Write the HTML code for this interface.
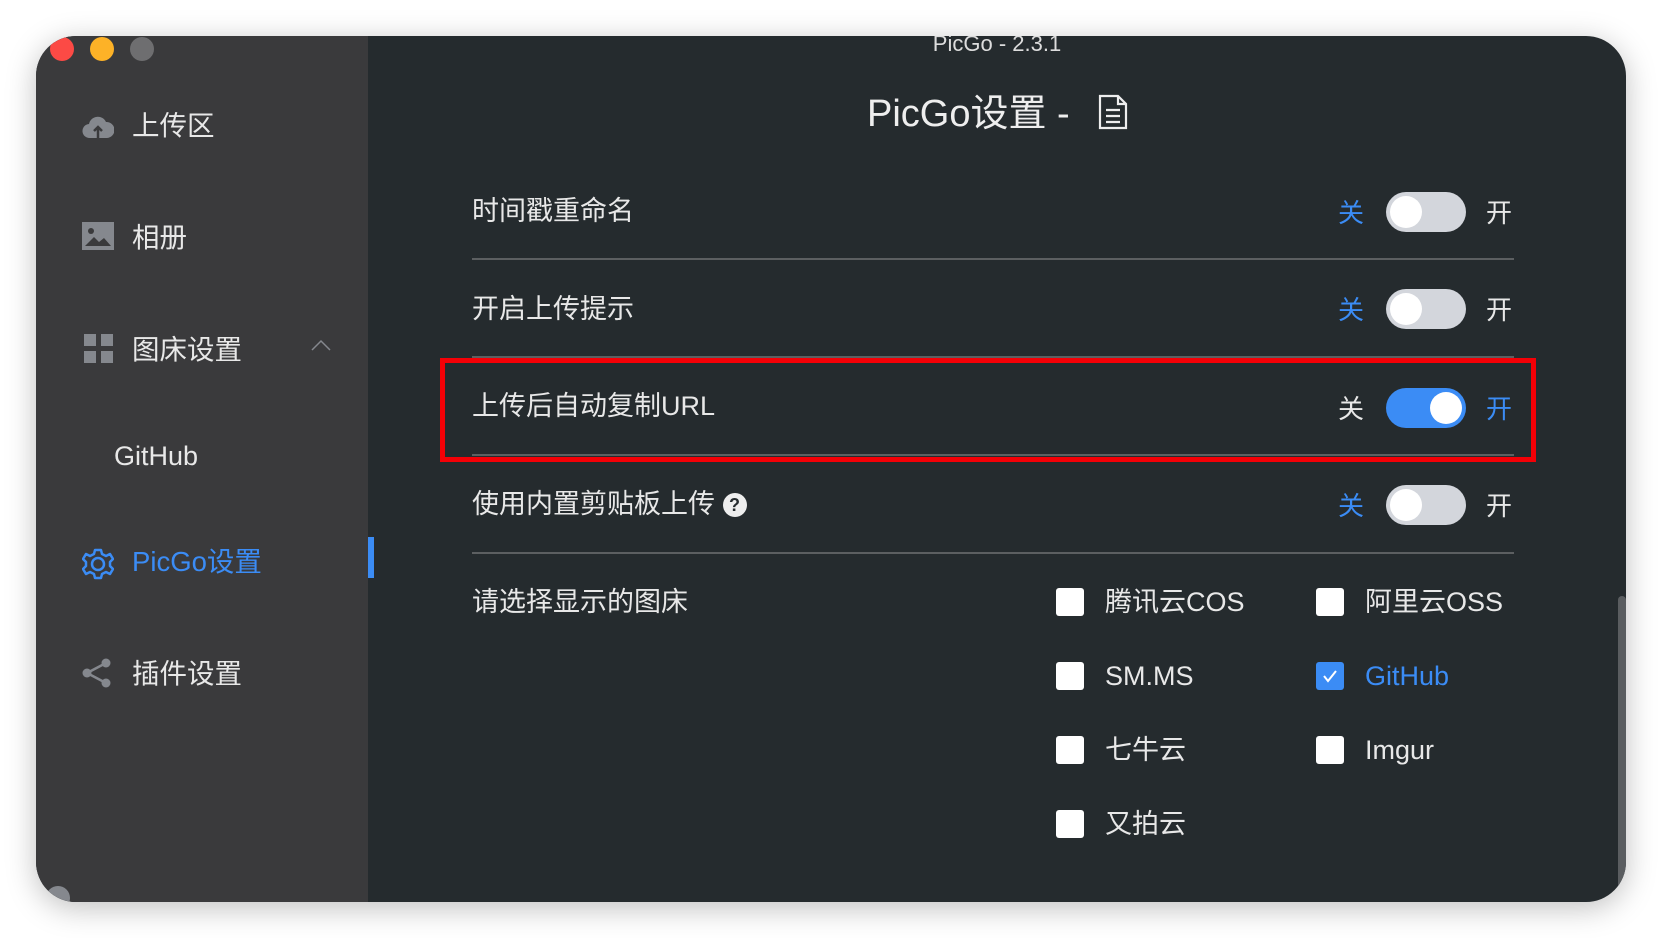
<!DOCTYPE html>
<html><head><meta charset="utf-8"><style>
*{margin:0;padding:0;box-sizing:border-box}
body{width:1662px;height:938px;background:#fff;position:relative;overflow:hidden;font-family:"Liberation Sans","Noto Sans CJK SC",sans-serif}
.win{position:absolute;left:36px;top:36px;width:1590px;height:866px;border-radius:40px;background:#252b2e;overflow:hidden;box-shadow:0 6px 30px rgba(0,0,0,.25)}
.side{position:absolute;left:0;top:0;width:332px;height:866px;background:#3a3a3c}
.dot{position:absolute;top:1px;width:24px;height:24px;border-radius:50%}
.a{position:absolute;white-space:nowrap}
.si{position:absolute;font-size:27.5px;color:#e8e8e8;line-height:32px}
.lbl{position:absolute;left:436px;font-size:27px;color:#e8e8e8;line-height:30px}
.div{position:absolute;left:436px;width:1042px;height:2px;background:#5c5f61}
.tg{position:absolute;left:1350px;width:80px;height:40px;border-radius:20px;background:#d3d6dc}
.tg i{position:absolute;top:4px;left:4px;width:32px;height:32px;border-radius:50%;background:#fff}
.off{position:absolute;left:1302px;font-size:26px;line-height:30px}
.on{position:absolute;left:1450px;font-size:26px;line-height:30px}
.cb{position:absolute;width:28px;height:28px;border-radius:3px;background:#fff}
.ct{position:absolute;font-size:27px;color:#e8e8e8;line-height:30px}
</style></head><body>
<div class="win">
<div class="side">
<div class="dot" style="left:14px;background:#fc4a45"></div>
<div class="dot" style="left:54px;background:#fdb227"></div>
<div class="dot" style="left:94px;background:#6e6e70"></div>
<svg class="a" style="left:46px;top:76px" width="32" height="28" viewBox="0 0 32 28"><path d="M8 26a7 7 0 0 1-1-14 9 9 0 0 1 17-2 7 7 0 0 1 1 16z" fill="#85888e"/><path d="M16 26V15m-4 4l4-4 4 4" stroke="#3a3a3c" stroke-width="2.5" fill="none"/></svg>
<div class="si" style="left:96px;top:74px">上传区</div>
<svg class="a" style="left:46px;top:186px" width="32" height="28" viewBox="0 0 32 28"><rect width="32" height="28" fill="#85888e"/><circle cx="9" cy="9" r="3" fill="#3a3a3c"/><path d="M3 24l9-9 5 5 5-4 7 8z" fill="#3a3a3c"/></svg>
<div class="si" style="left:96px;top:186px">相册</div>
<svg class="a" style="left:48px;top:298px" width="30" height="30" viewBox="0 0 30 30" fill="#85888e"><rect width="12" height="12"/><rect x="17" width="12" height="12"/><rect y="17" width="12" height="12"/><rect x="17" y="17" width="12" height="12"/></svg>
<div class="si" style="left:96px;top:298px">图床设置</div>
<svg class="a" style="left:275px;top:303px" width="20" height="12" viewBox="0 0 20 12"><path d="M1 11l9-9 9 9" stroke="#85888e" stroke-width="1.5" fill="none"/></svg>
<div class="si" style="left:78px;top:404px;font-size:27px">GitHub</div>
<svg class="a" style="left:46px;top:512px" width="32" height="32" viewBox="0 0 32 32"><circle cx="16" cy="16" r="6" stroke="#3b8cf5" stroke-width="2.5" fill="none"/><path d="M13 2h6l1 4 4 2 4-2 3 5-3 3v4l3 3-3 5-4-2-4 2-1 4h-6l-1-4-4-2-4 2-3-5 3-3v-4L1 11l3-5 4 2 4-2z" stroke="#3b8cf5" stroke-width="2.5" fill="none" stroke-linejoin="round"/></svg>
<div class="si" style="left:96px;top:510px;color:#3b8cf5">PicGo设置</div>
<svg class="a" style="left:46px;top:622px" width="30" height="30" viewBox="0 0 30 30" fill="#85888e"><circle cx="24" cy="5" r="4.5"/><circle cx="5" cy="15" r="4.5"/><circle cx="24" cy="25" r="4.5"/><path d="M24 5L5 15l19 10" stroke="#85888e" stroke-width="2.5" fill="none"/></svg>
<div class="si" style="left:96px;top:622px">插件设置</div>
<div class="a" style="left:10px;top:850px;width:24px;height:24px;border-radius:50%;background:#85888e"></div>
</div>
<div class="a" style="left:332px;top:501px;width:6px;height:41px;background:#3b8cf5"></div>
<div class="a" style="left:332px;width:1258px;top:-5px;text-align:center;font-size:22px;color:#ddd">PicGo - 2.3.1</div>
<div class="a" style="left:831px;top:56px;font-size:38px;color:#eee;line-height:44px">PicGo设置 - </div>
<svg class="a" style="left:1062px;top:58px" width="30" height="36" viewBox="0 0 30 36"><path d="M2 2h18l8 8v24H2z M20 2v8h8 M8 16h14 M8 22h14 M8 28h14" stroke="#eee" stroke-width="2.2" fill="none"/></svg>

<div class="lbl" style="top:160px">时间戳重命名</div>
<div class="off" style="top:162px;color:#3b8cf5">关</div><div class="tg" style="top:156px"><i></i></div><div class="on" style="top:162px;color:#e8e8e8">开</div>
<div class="div" style="top:222px"></div>
<div class="lbl" style="top:258px">开启上传提示</div>
<div class="off" style="top:259px;color:#3b8cf5">关</div><div class="tg" style="top:253px"><i></i></div><div class="on" style="top:259px;color:#e8e8e8">开</div>
<div class="div" style="top:320px"></div>
<div class="lbl" style="top:355px">上传后自动复制URL</div>
<div class="off" style="top:358px;color:#e8e8e8">关</div><div class="tg" style="top:352px;background:#3b8cf5"><i style="left:44px"></i></div><div class="on" style="top:358px;color:#3b8cf5">开</div>
<div class="div" style="top:418px"></div>
<div class="a" style="left:404px;top:322px;width:1096px;height:104px;border:5px solid #f40006"></div>
<div class="lbl" style="top:453px">使用内置剪贴板上传 <span style="display:inline-block;width:24px;height:24px;border-radius:50%;background:#eee;color:#252b2e;font-size:18px;line-height:24px;text-align:center;font-weight:bold;vertical-align:2px">?</span></div>
<div class="off" style="top:455px;color:#3b8cf5">关</div><div class="tg" style="top:449px"><i></i></div><div class="on" style="top:455px;color:#e8e8e8">开</div>
<div class="div" style="top:516px"></div>
<div class="lbl" style="top:551px">请选择显示的图床</div>
<div class="cb" style="left:1020px;top:552px"></div><div class="ct" style="left:1069px;top:551px">腾讯云COS</div>
<div class="cb" style="left:1280px;top:552px"></div><div class="ct" style="left:1329px;top:551px">阿里云OSS</div>
<div class="cb" style="left:1020px;top:626px"></div><div class="ct" style="left:1069px;top:625px">SM.MS</div>
<div class="cb" style="left:1280px;top:626px;background:#3b8cf5"><svg width="28" height="28" viewBox="0 0 28 28"><path d="M8 14l4 5 8-10" stroke="#fff" stroke-width="2" fill="none"/></svg></div><div class="ct" style="left:1329px;top:625px;color:#3b8cf5">GitHub</div>
<div class="cb" style="left:1020px;top:700px"></div><div class="ct" style="left:1069px;top:699px">七牛云</div>
<div class="cb" style="left:1280px;top:700px"></div><div class="ct" style="left:1329px;top:699px">Imgur</div>
<div class="cb" style="left:1020px;top:774px"></div><div class="ct" style="left:1069px;top:773px">又拍云</div>
<div class="a" style="left:1582px;top:560px;width:8px;height:306px;background:#5a5d60;border-radius:4px"></div>
</div>
</body></html>
